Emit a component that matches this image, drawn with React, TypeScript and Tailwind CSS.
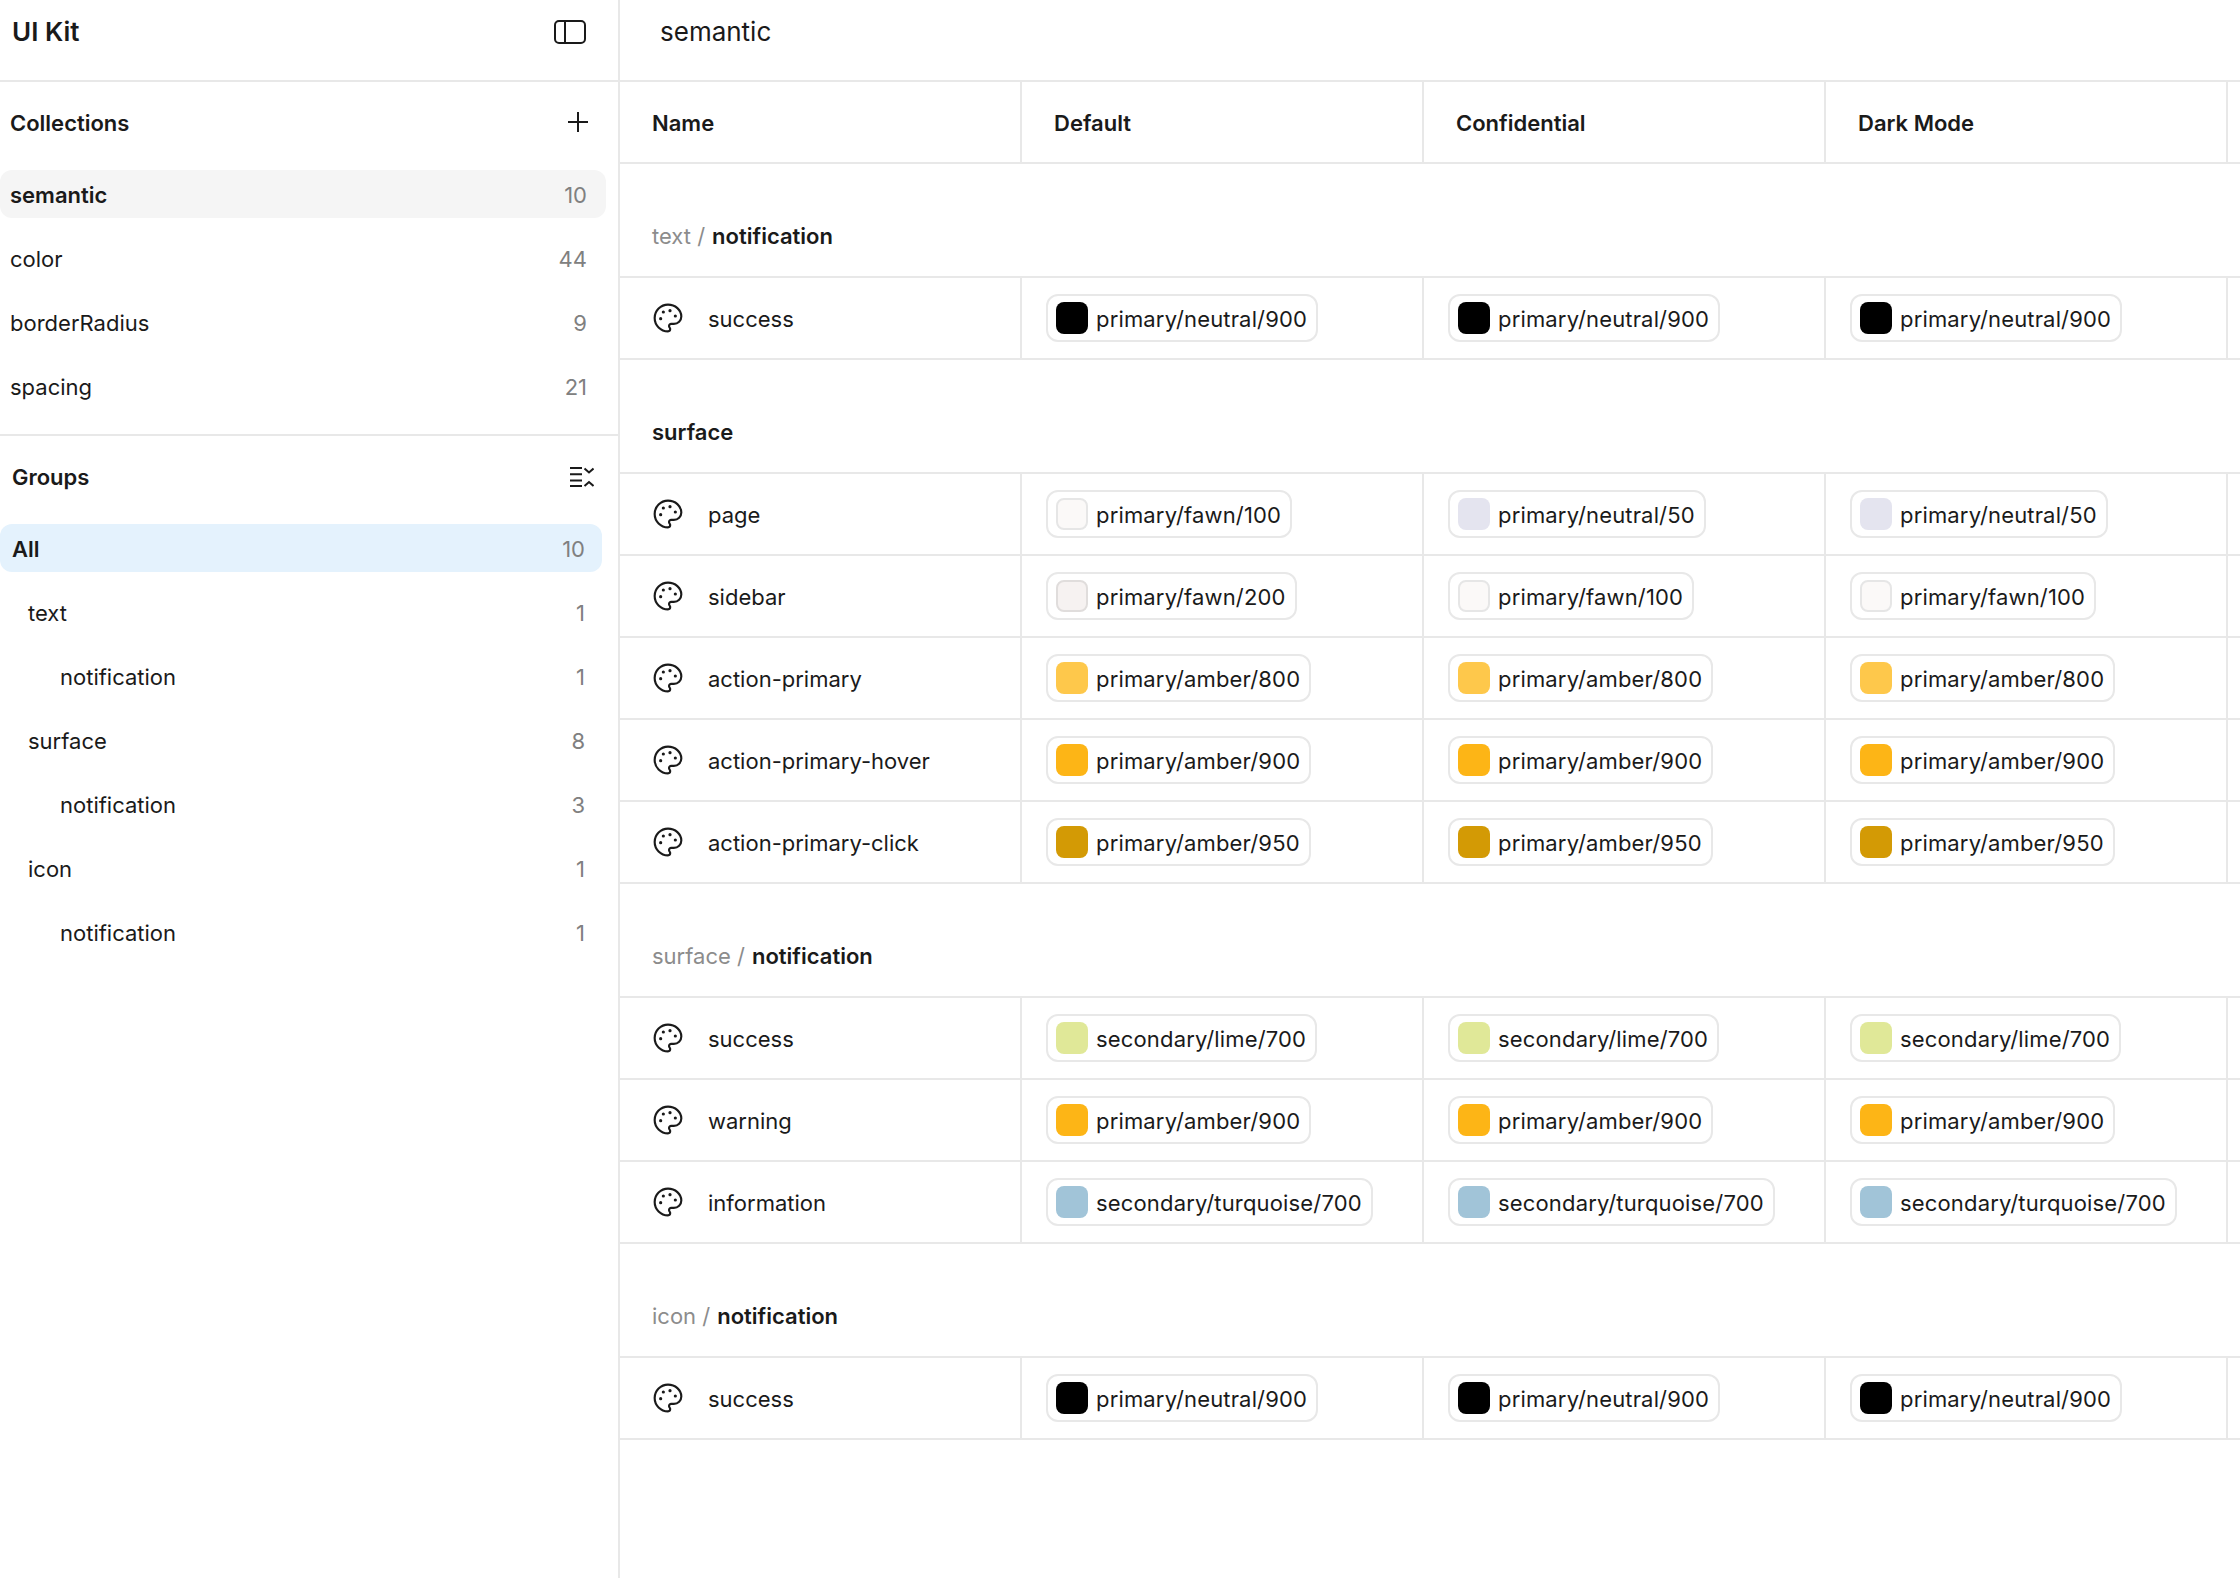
const FONT = "font-['Inter',sans-serif]";

type Chip = { name: string; color: string; border?: string };

const neutral900: Chip = { name: "primary/neutral/900", color: "bg-[#000000]" };
const neutral50: Chip = { name: "primary/neutral/50", color: "bg-[#e4e4ef]" };
const fawn100: Chip = { name: "primary/fawn/100", color: "bg-[#fbf9f8]", border: "border-2 border-[#e6e6e6]" };
const fawn200: Chip = { name: "primary/fawn/200", color: "bg-[#f6f2f1]", border: "border-2 border-[#e0dddc]" };
const amber800: Chip = { name: "primary/amber/800", color: "bg-[#fec84b]" };
const amber900: Chip = { name: "primary/amber/900", color: "bg-[#fdb516]" };
const amber950: Chip = { name: "primary/amber/950", color: "bg-[#d39a05]" };
const lime: Chip = { name: "secondary/lime/700", color: "bg-[#e0e898]" };
const turquoise: Chip = { name: "secondary/turquoise/700", color: "bg-[#a1c4d8]" };

type Row = { name: string; values: [Chip, Chip, Chip] };
type Group = { prefix?: string; title: string; rows: Row[] };

const same = (c: Chip): [Chip, Chip, Chip] => [c, c, c];

const groups: Group[] = [
  { prefix: "text", title: "notification", rows: [{ name: "success", values: same(neutral900) }] },
  {
    title: "surface",
    rows: [
      { name: "page", values: [fawn100, neutral50, neutral50] },
      { name: "sidebar", values: [fawn200, fawn100, fawn100] },
      { name: "action-primary", values: same(amber800) },
      { name: "action-primary-hover", values: same(amber900) },
      { name: "action-primary-click", values: same(amber950) },
    ],
  },
  {
    prefix: "surface",
    title: "notification",
    rows: [
      { name: "success", values: same(lime) },
      { name: "warning", values: same(amber900) },
      { name: "information", values: same(turquoise) },
    ],
  },
  { prefix: "icon", title: "notification", rows: [{ name: "success", values: same(neutral900) }] },
];

const collections = [
  { name: "semantic", count: 10, active: true },
  { name: "color", count: 44 },
  { name: "borderRadius", count: 9 },
  { name: "spacing", count: 21 },
];

const tree = [
  { name: "text", count: 1, indent: "pl-7" },
  { name: "notification", count: 1, indent: "pl-[60px]" },
  { name: "surface", count: 8, indent: "pl-7" },
  { name: "notification", count: 3, indent: "pl-[60px]" },
  { name: "icon", count: 1, indent: "pl-7" },
  { name: "notification", count: 1, indent: "pl-[60px]" },
];

function PaletteIcon() {
  return (
    <svg width="32" height="32" viewBox="0 0 24 24" fill="none" stroke="#1a1a1a" strokeWidth="1.6" strokeLinecap="round" strokeLinejoin="round" className="shrink-0">
      <path d="M12 2C6.5 2 2 6.5 2 12s4.5 10 10 10c.926 0 1.648-.746 1.648-1.688 0-.437-.18-.835-.437-1.125-.29-.289-.438-.652-.438-1.125a1.64 1.64 0 0 1 1.668-1.668h1.996c3.051 0 5.555-2.503 5.555-5.554C21.965 6.012 17.461 2 12 2z" />
      <circle cx="13.5" cy="6.5" r="1.2" fill="#1a1a1a" stroke="none" />
      <circle cx="17.5" cy="10.5" r="1.2" fill="#1a1a1a" stroke="none" />
      <circle cx="8.5" cy="7.5" r="1.2" fill="#1a1a1a" stroke="none" />
      <circle cx="6.5" cy="12.5" r="1.2" fill="#1a1a1a" stroke="none" />
    </svg>
  );
}

function PanelIcon() {
  return (
    <svg width="34" height="26" viewBox="0 0 34 26" fill="none" stroke="#1a1a1a" strokeWidth="2">
      <rect x="2" y="2" width="30" height="22" rx="4" />
      <path d="M12 2v22" />
    </svg>
  );
}

function PlusIcon() {
  return (
    <svg width="20" height="20" viewBox="0 0 20 20" fill="none" stroke="#1a1a1a" strokeWidth="2">
      <path d="M10 0v20M0 10h20" />
    </svg>
  );
}

function CollapseIcon() {
  return (
    <svg width="24" height="20" viewBox="0 0 24 20" fill="none" stroke="#1a1a1a" strokeWidth="2">
      <path d="M0 1h12M0 7.3h12M0 13.5h12M0 19h12" />
      <path d="M14.5 1.5l4.5 4 4.5-4M14.5 19l4.5-4 4.5 4" />
    </svg>
  );
}

function ChipView({ chip }: { chip: Chip }) {
  return (
    <div className="flex h-12 items-center gap-2 rounded-xl border-2 border-[#e8e8e8] pl-2 pr-[9px]">
      <span className={`h-8 w-8 shrink-0 rounded-lg ${chip.color} ${chip.border ?? ""}`} />
      <span className="whitespace-nowrap pt-px tracking-[0.16px] text-[#1a1a1a]">{chip.name}</span>
    </div>
  );
}

function Header({ label }: { label: string }) {
  return (
    <div className="flex h-full w-[402px] shrink-0 items-center border-r-2 border-[#e8e8e8] pl-8 pt-px font-semibold text-[#1a1a1a]">{label}</div>
  );
}

export default function App() {
  return (
    <div className={`flex h-[1578px] w-[2240px] overflow-hidden bg-white text-[22px] leading-9 text-[#1a1a1a] ${FONT}`}>
      <aside className="flex w-[620px] shrink-0 flex-col border-r-2 border-[#e8e8e8]">
        <div className="flex h-[82px] shrink-0 items-center justify-between border-b-2 border-[#e8e8e8] pb-4 pl-3 pr-[31px]">
          <span className="text-[26px] font-semibold">UI Kit</span>
          <PanelIcon />
        </div>
        <div className="flex h-[354px] shrink-0 flex-col border-b-2 border-[#e8e8e8] pr-3">
          <div className="flex h-[80px] shrink-0 items-center justify-between pl-2.5 pr-[18px] font-semibold">
            <span className="pt-px">Collections</span>
            <PlusIcon />
          </div>
          <div className="mt-2 flex flex-col gap-4">
            {collections.map((c) => (
              <div key={c.name} className={`flex h-12 items-center justify-between rounded-xl pl-2.5 pr-[19px] ${c.active ? "bg-[#f5f5f5] font-semibold" : ""}`}>
                <span className="pt-px">{c.name}</span>
                <span className="pt-px font-normal text-[#808080]">{c.count}</span>
              </div>
            ))}
          </div>
        </div>
        <div className="flex flex-col pr-4">
          <div className="flex h-[82px] shrink-0 items-center justify-between pl-3 pr-2 font-semibold">
            <span>Groups</span>
            <CollapseIcon />
          </div>
          <div className="mt-1.5 flex flex-col gap-4">
            <div className="flex h-12 items-center justify-between rounded-xl bg-[#e4f2fd] pl-3 pr-[17px] font-semibold">
              <span className="pt-px">All</span>
              <span className="pt-px font-normal text-[#808080]">10</span>
            </div>
            {tree.map((t, i) => (
              <div key={i} className={`flex h-12 items-center justify-between pr-[17px] ${t.indent}`}>
                <span className="pt-px">{t.name}</span>
                <span className="pt-px text-[#808080]">{t.count}</span>
              </div>
            ))}
          </div>
        </div>
      </aside>
      <main className="flex min-w-0 flex-1 flex-col overflow-hidden">
        <div className="flex h-[82px] shrink-0 items-center border-b-2 border-[#e8e8e8] pb-4 pl-10 text-[26px]">semantic</div>
        <div className="flex h-[82px] shrink-0 border-b-2 border-[#e8e8e8]">
          <Header label="Name" />
          <Header label="Default" />
          <Header label="Confidential" />
          <Header label="Dark Mode" />
          <div className="h-full w-[402px] shrink-0 border-r-2 border-[#e8e8e8]" />
        </div>
        {groups.map((g, gi) => (
          <div key={gi} className="flex flex-col">
            <div className="flex h-[114px] shrink-0 items-center border-b-2 border-[#e8e8e8] pl-8 pt-8">
              {g.prefix && <span className="mr-[7px] text-[#8c8c8c]">{g.prefix} /</span>}
              <span className="font-semibold">{g.title}</span>
            </div>
            {g.rows.map((r, ri) => (
              <div key={ri} className="flex h-[82px] shrink-0 border-b-2 border-[#e8e8e8]">
                <div className="flex h-full w-[402px] shrink-0 items-center gap-6 border-r-2 border-[#e8e8e8] pl-8">
                  <PaletteIcon />
                  <span className="pt-px">{r.name}</span>
                </div>
                {r.values.map((c, ci) => (
                  <div key={ci} className="flex h-full w-[402px] shrink-0 items-center border-r-2 border-[#e8e8e8] pl-6">
                    <ChipView chip={c} />
                  </div>
                ))}
                <div className="h-full w-[402px] shrink-0 border-r-2 border-[#e8e8e8]" />
              </div>
            ))}
          </div>
        ))}
      </main>
    </div>
  );
}
